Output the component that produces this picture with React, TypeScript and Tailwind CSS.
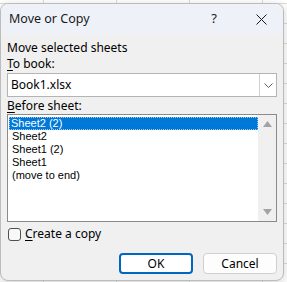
import React from 'react';

const sheets = ['Sheet2 (2)', 'Sheet2', 'Sheet1 (2)', 'Sheet1', '(move to end)'];

export default function App() {
  return (
    <div
      className="w-[287px] h-[282px] overflow-hidden pt-[3px] bg-white bg-[linear-gradient(to_right,#dcdcdc_1px,transparent_1px),linear-gradient(to_bottom,#dcdcdc_1px,transparent_1px)] bg-[length:73px_20px] bg-[position:43px_3px]"
      style={{ fontFamily: '"Segoe UI", "Noto Sans", Arial, sans-serif' }}
    >
      <div className="w-[284px] h-[278px] flex flex-col rounded-[8px] border border-[#bcbcbc] bg-[#f0f0f0] overflow-hidden shadow-[0_2px_8px_rgba(0,0,0,0.18)]">
        {/* title bar */}
        <div className="h-[30px] flex items-center bg-[#eef2f8] pl-[8px] text-[12.5px] text-[#1a1a1a]">
          <span className="flex-1">Move or Copy</span>
          <span className="w-[14px] text-center text-[13px] mr-[35px]">?</span>
          <svg width="11" height="11" viewBox="0 0 11 11" className="mr-[16px]">
            <path d="M0.5 0.5L10.5 10.5M10.5 0.5L0.5 10.5" stroke="#1a1a1a" strokeWidth="1" />
          </svg>
        </div>

        {/* body */}
        <div className="flex flex-col px-[6px] pt-[6px] text-[12px] leading-[16px] text-black">
          <div>Move selected sheets</div>
          <div>
            <span className="underline underline-offset-2">T</span>o book:
          </div>

          <div className="mt-[1px] h-[24px] flex items-center border border-[#b4b4b4] bg-white">
            <span className="flex-1 pl-[3px]">Book1.xlsx</span>
            <div className="w-[17px] h-[22px] flex items-center justify-center border-l border-[#d0d0d0] bg-white">
              <svg width="9" height="5" viewBox="0 0 9 5">
                <path d="M0.5 0.5L4.5 4.5L8.5 0.5" stroke="#606060" strokeWidth="1" fill="none" />
              </svg>
            </div>
          </div>

          <div className="mt-[1px]">
            <span className="underline underline-offset-2">B</span>efore sheet:
          </div>

          <div className="h-[108px] flex border border-[#8a8a8a] bg-white">
            <div
              className="flex-1 flex flex-col pt-[2px] pl-[1px] text-[11px] leading-[13px]"
              style={{ fontFamily: '"Liberation Sans", Arial, sans-serif' }}
            >
              {sheets.map((s, i) => (
                <div
                  key={s}
                  className={
                    i === 0
                      ? 'h-[13px] pl-[2px] bg-[#0078d7] text-white outline outline-1 outline-dotted outline-[#9cc8ef] -outline-offset-1'
                      : 'h-[13px] pl-[3px]'
                  }
                >
                  {s}
                </div>
              ))}
            </div>
            <div className="w-[18px] flex flex-col items-center justify-between bg-[#f0f0f0] py-[6px]">
              <svg width="9" height="6" viewBox="0 0 9 6">
                <path d="M4.5 0L9 6H0Z" fill="#a3a3a3" />
              </svg>
              <svg width="9" height="6" viewBox="0 0 9 6">
                <path d="M0 0H9L4.5 6Z" fill="#a3a3a3" />
              </svg>
            </div>
          </div>

          <label className="mt-[4px] flex items-center gap-[4px] h-[16px]">
            <span className="ml-[1px] w-[13px] h-[13px] rounded-[3px] border border-[#505050] bg-[#f8f8f8]" />
            <span>
              <span className="underline underline-offset-2">C</span>reate a copy
            </span>
          </label>

          <div className="mt-[11px] flex justify-end gap-[10px]">
            <button className="w-[74px] h-[21px] rounded-[4px] border-2 border-[#0067c0] bg-white text-[12px] leading-none">
              OK
            </button>
            <button className="w-[74px] h-[21px] rounded-[4px] border border-[#d0d0d0] bg-[#fdfdfd] text-[12px] leading-none">
              Cancel
            </button>
          </div>
        </div>
      </div>
    </div>
  );
}
